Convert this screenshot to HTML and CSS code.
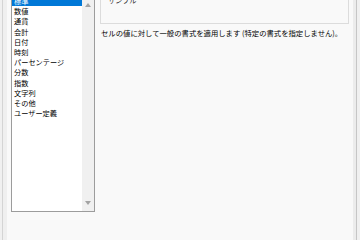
FILE: index.html
```html
<!DOCTYPE html>
<html lang="ja">
<head>
<meta charset="utf-8">
<link rel="stylesheet" href="styles.css">
</head>
<body>
<div class="page">
  <div class="content">
    <div class="listbox">
      <ul class="items">
        <li class="sel">標準</li>
        <li>数値</li>
        <li>通貨</li>
        <li>会計</li>
        <li>日付</li>
        <li>時刻</li>
        <li>パーセンテージ</li>
        <li>分数</li>
        <li>指数</li>
        <li>文字列</li>
        <li>その他</li>
        <li>ユーザー定義</li>
      </ul>
      <div class="scroll">
        <span class="arrow up"></span>
        <span class="arrow down"></span>
      </div>
    </div>
    <div class="right">
      <div class="sample">サンプル</div>
      <p class="desc">セルの値に対して一般の書式を適用します (特定の書式を指定しません)。</p>
    </div>
  </div>
</div>
</body>
</html>
```

FILE: styles.css
```css
html, body {
  margin: 0;
  padding: 0;
  background: #f0f0f0;
  height: 240px;
  overflow: hidden;
}
body {
  font-family: "Noto Sans CJK JP", "Noto Sans", sans-serif;
  font-size: 7.2px;
  color: #000;
}
.page {
  margin-left: 2px;
  width: 353px;
  height: 240px;
  overflow: hidden;
  border-left: 1px solid #d4d4d4;
  border-right: 1px solid #c6c6c6;
  background: #f9f9f9;
  box-shadow: inset 4px 0 0 #efefef, inset -3px 0 0 #ececec;
}
.content {
  display: flex;
  margin-top: -6px;
  padding-left: 8px;
}
.listbox {
  display: flex;
  width: 82px;
  height: 216px;
  border: 1px solid #9c9c9c;
  background: #fff;
}
.items {
  list-style: none;
  margin: 0;
  padding: 1px 0 0;
  flex: 1;
}
.items li {
  height: 10.2px;
  line-height: 10.2px;
  padding-left: 2px;
  white-space: nowrap;
}
.items li.sel {
  background: #0078d7;
  color: #fff;
}
.scroll {
  width: 12px;
  background: #f0f0f0;
  display: flex;
  flex-direction: column;
  justify-content: space-between;
  align-items: center;
  padding: 8px 0 6px;
}
.arrow {
  width: 0;
  height: 0;
  border-left: 3.5px solid transparent;
  border-right: 3.5px solid transparent;
}
.arrow.up { border-bottom: 4px solid #a3a3a3; }
.arrow.down { border-top: 4px solid #a3a3a3; }
.right {
  margin-left: 5px;
  display: flex;
  flex-direction: column;
}
.sample {
  width: 240px;
  height: 28px;
  border: 1px solid #dcdcdc;
  padding: 0 0 0 7px;
  line-height: 10px;
  color: #222;
}
.desc {
  margin: 4px 0 0 1px;
  font-size: 7.35px;
  line-height: 10px;
  white-space: nowrap;
}
```
